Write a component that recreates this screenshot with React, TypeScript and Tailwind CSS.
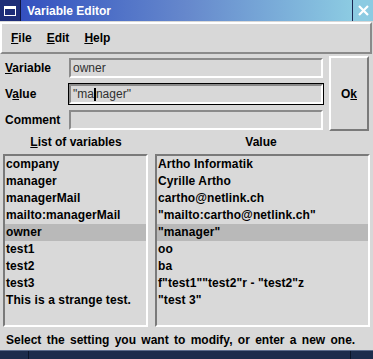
import React from 'react';

const variables = [
  'company',
  'manager',
  'managerMail',
  'mailto:managerMail',
  'owner',
  'test1',
  'test2',
  'test3',
  'This is a strange test.',
];

const values = [
  'Artho Informatik',
  'Cyrille Artho',
  'cartho@netlink.ch',
  '"mailto:cartho@netlink.ch"',
  '"manager"',
  'oo',
  'ba',
  'f"test1""test2"r - "test2"z',
  '"test 3"',
];

const selected = 4;

const ListBox = ({ items, className }: { items: string[]; className: string }) => (
  <div
    className={
      'h-[173px] bg-[#d9d9d9] border-2 border-t-[#7a7a7a] border-l-[#7a7a7a] border-b-white border-r-white overflow-hidden ' +
      className
    }
  >
    {items.map((item, i) => (
      <div
        key={i}
        className={
          'h-[17px] leading-[17px] px-[1px] whitespace-pre text-black tracking-[0.1px] ' +
          (i === selected ? 'bg-[#b9b9b9]' : '')
        }
      >
        {item}
      </div>
    ))}
  </div>
);

export default function App() {
  return (
    <div className="w-[373px] h-[359px] flex flex-col bg-[#d8d8d8] font-['Liberation_Sans',Arial,sans-serif] text-[12px] font-bold text-black overflow-hidden select-none">
      {/* Title bar */}
      <div className="h-[21px] flex shrink-0">
        <div className="w-[21px] h-[21px] bg-[#1d2d78] border-r border-[#0c1440] flex items-center justify-center">
          <div className="w-[12px] h-[10px] border border-white border-t-[3px]" />
        </div>
        <div className="flex-1 bg-gradient-to-r from-[#3450bf] via-[#6688cc] to-[#8ccbe2] flex items-center pl-[6px] text-white text-[12px]">
          Variable Editor
        </div>
        <div className="w-[21px] h-[21px] bg-[#8ccbe2] border-l border-[#1a2450] flex items-center justify-center">
          <svg width="11" height="11" viewBox="0 0 11 11">
            <path d="M1 1 L10 10 M10 1 L1 10" stroke="white" strokeWidth="2.2" />
          </svg>
        </div>
      </div>

      {/* Menu bar */}
      <div className="mt-[1px] h-[32px] shrink-0 flex items-center gap-[15px] pl-[9px] border-2 border-t-white border-l-white border-b-[#8a8a8a] border-r-[#8a8a8a] mr-[1px]">
        <span>
          <span className="underline">F</span>ile
        </span>
        <span>
          <span className="underline">E</span>dit
        </span>
        <span>
          <span className="underline">H</span>elp
        </span>
      </div>

      {/* Form */}
      <div className="flex pt-[2px] shrink-0">
        <div className="flex flex-col gap-[6px] pt-[2px]">
          <div className="flex items-center h-[20px]">
            <span className="w-[69px] pl-[5px]">
              <span className="underline">V</span>ariable
            </span>
            <div className="w-[254px] h-[20px] border-2 border-t-[#8a8a8a] border-l-[#8a8a8a] border-b-white border-r-white flex items-center pl-[2px] font-normal text-[#303030]">
              owner
            </div>
          </div>
          <div className="flex items-center h-[20px]">
            <span className="w-[68px] pl-[5px]">
              V<span className="underline">a</span>lue
            </span>
            <div className="w-[256px] h-[22px] border border-black">
              <div className="w-full h-full border-2 border-t-[#8a8a8a] border-l-[#8a8a8a] border-b-white border-r-white flex items-center pl-[2px] font-normal text-[#303030]">
                "ma
                <span className="inline-block w-[2px] h-[13px] bg-black" />
                nager"
              </div>
            </div>
          </div>
          <div className="flex items-center h-[20px]">
            <span className="w-[69px] pl-[5px]">Comment</span>
            <div className="w-[254px] h-[20px] border-2 border-t-[#8a8a8a] border-l-[#8a8a8a] border-b-white border-r-white" />
          </div>
        </div>
        <div className="ml-[5px] w-[40px] h-[75px] border-2 border-t-white border-l-white border-b-[#7a7a7a] border-r-[#7a7a7a] flex items-center justify-center">
          <span>
            O<span className="underline">k</span>
          </span>
        </div>
      </div>

      {/* Column headers */}
      <div className="flex h-[21px] items-start pt-[1px] leading-[16px] shrink-0 mt-[2px]">
        <div className="w-[152px] text-center">
          <span className="underline">L</span>ist of variables
        </div>
        <div className="flex-1 text-center pr-[3px]">Value</div>
      </div>

      {/* Lists */}
      <div className="flex pl-[3px] gap-[7px] shrink-0">
        <ListBox items={variables} className="w-[145px]" />
        <ListBox items={values} className="w-[215px]" />
      </div>

      {/* Status */}
      <div className="h-[23px] flex items-center pt-[2px] pl-[6px] shrink-0 whitespace-nowrap [word-spacing:2px]">
        Select the setting you want to modify, or enter a new one.
      </div>

      {/* Taskbar strip */}
      <div className="flex-1 flex bg-[#1c2c4c] border-t border-[#5a6a8a]">
        <div className="w-[29px] border-r border-[#0a1428]" />
        <div className="flex-1 border-r border-[#0a1428]" />
        <div className="w-[22px]" />
      </div>
    </div>
  );
}
